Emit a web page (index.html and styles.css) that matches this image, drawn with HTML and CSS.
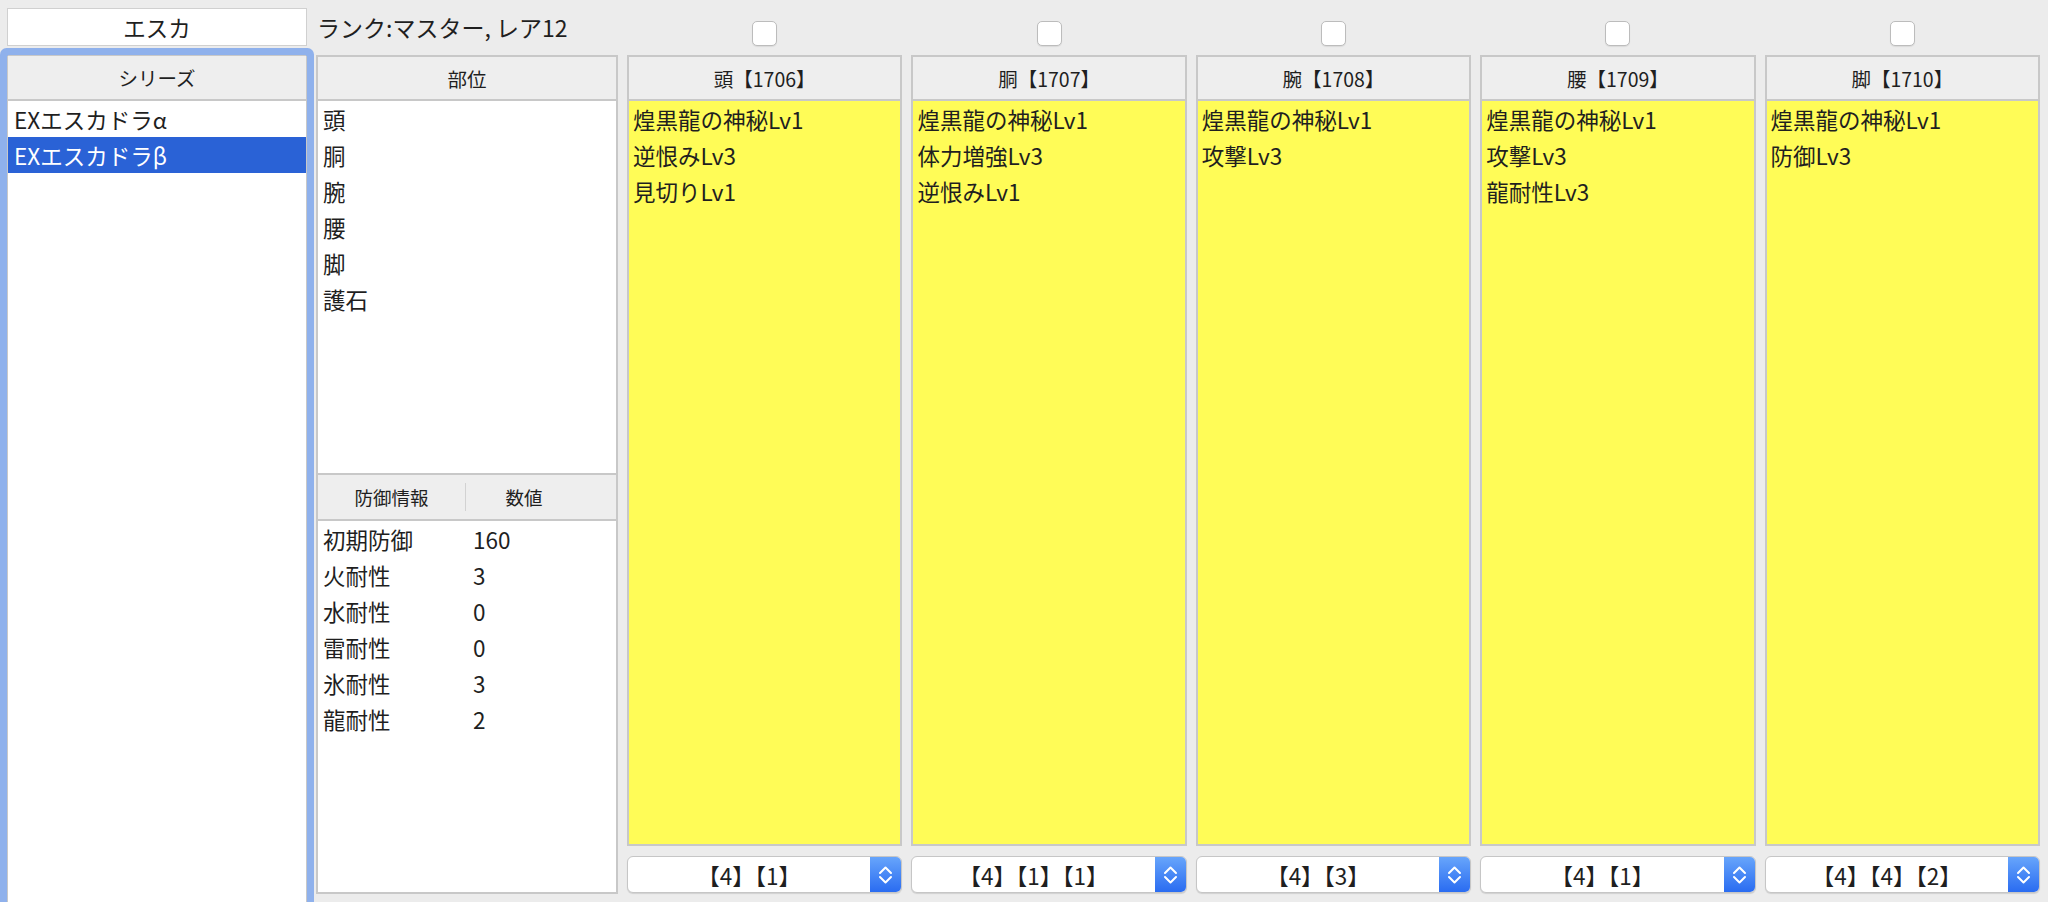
FILE: index.html
```html
<!DOCTYPE html>
<html lang="ja">
<head>
<meta charset="utf-8">
<title>エスカ</title>
<link rel="stylesheet" href="styles.css">
</head>
<body>
<div class="app">
  <div class="grid toprow">
    <div class="field">エスカ</div>
    <div class="rank">ランク:マスター, レア12</div>
    <div class="cbcell"><span class="cb"></span></div>
    <div class="cbcell"><span class="cb"></span></div>
    <div class="cbcell"><span class="cb"></span></div>
    <div class="cbcell"><span class="cb"></span></div>
    <div class="cbcell"><span class="cb"></span></div>
  </div>
  <div class="grid main">
    <div class="panel series">
      <div class="hdr">シリーズ</div>
      <div class="row">EXエスカドラα</div>
      <div class="row sel">EXエスカドラβ</div>
    </div>
    <div class="midcol">
      <div class="panel parts">
        <div class="hdr">部位</div>
        <div class="row">頭</div>
        <div class="row">胴</div>
        <div class="row">腕</div>
        <div class="row">腰</div>
        <div class="row">脚</div>
        <div class="row">護石</div>
      </div>
      <div class="panel defense">
        <div class="dhdr"><div class="c1">防御情報</div><div class="c2">数値</div></div>
        <div class="drow"><span>初期防御</span><span>160</span></div>
        <div class="drow"><span>火耐性</span><span>3</span></div>
        <div class="drow"><span>水耐性</span><span>0</span></div>
        <div class="drow"><span>雷耐性</span><span>0</span></div>
        <div class="drow"><span>氷耐性</span><span>3</span></div>
        <div class="drow"><span>龍耐性</span><span>2</span></div>
      </div>
    </div>
    <div class="armcol">
      <div class="panel armor">
        <div class="hdr">頭【1706】</div>
        <div class="row">煌黒龍の神秘Lv1</div>
        <div class="row">逆恨みLv3</div>
        <div class="row">見切りLv1</div>
      </div>
      <div class="popup"><div class="val">【4】【1】</div><div class="btn"><svg viewBox="0 0 31 37" width="31" height="37"><path d="M10 17 L15.5 11.5 L21 17 M10 21 L15.5 26.5 L21 21" fill="none" stroke="#fff" stroke-width="2" stroke-linecap="round" stroke-linejoin="round"/></svg></div></div>
    </div>
    <div class="armcol">
      <div class="panel armor">
        <div class="hdr">胴【1707】</div>
        <div class="row">煌黒龍の神秘Lv1</div>
        <div class="row">体力増強Lv3</div>
        <div class="row">逆恨みLv1</div>
      </div>
      <div class="popup"><div class="val">【4】【1】【1】</div><div class="btn"><svg viewBox="0 0 31 37" width="31" height="37"><path d="M10 17 L15.5 11.5 L21 17 M10 21 L15.5 26.5 L21 21" fill="none" stroke="#fff" stroke-width="2" stroke-linecap="round" stroke-linejoin="round"/></svg></div></div>
    </div>
    <div class="armcol">
      <div class="panel armor">
        <div class="hdr">腕【1708】</div>
        <div class="row">煌黒龍の神秘Lv1</div>
        <div class="row">攻撃Lv3</div>
      </div>
      <div class="popup"><div class="val">【4】【3】</div><div class="btn"><svg viewBox="0 0 31 37" width="31" height="37"><path d="M10 17 L15.5 11.5 L21 17 M10 21 L15.5 26.5 L21 21" fill="none" stroke="#fff" stroke-width="2" stroke-linecap="round" stroke-linejoin="round"/></svg></div></div>
    </div>
    <div class="armcol">
      <div class="panel armor">
        <div class="hdr">腰【1709】</div>
        <div class="row">煌黒龍の神秘Lv1</div>
        <div class="row">攻撃Lv3</div>
        <div class="row">龍耐性Lv3</div>
      </div>
      <div class="popup"><div class="val">【4】【1】</div><div class="btn"><svg viewBox="0 0 31 37" width="31" height="37"><path d="M10 17 L15.5 11.5 L21 17 M10 21 L15.5 26.5 L21 21" fill="none" stroke="#fff" stroke-width="2" stroke-linecap="round" stroke-linejoin="round"/></svg></div></div>
    </div>
    <div class="armcol">
      <div class="panel armor">
        <div class="hdr">脚【1710】</div>
        <div class="row">煌黒龍の神秘Lv1</div>
        <div class="row">防御Lv3</div>
      </div>
      <div class="popup"><div class="val">【4】【4】【2】</div><div class="btn"><svg viewBox="0 0 31 37" width="31" height="37"><path d="M10 17 L15.5 11.5 L21 17 M10 21 L15.5 26.5 L21 21" fill="none" stroke="#fff" stroke-width="2" stroke-linecap="round" stroke-linejoin="round"/></svg></div></div>
    </div>
  </div>
</div>
</body>
</html>
```

FILE: styles.css
```css
html, body {
  margin: 0;
  padding: 0;
}
body {
  width: 2048px;
  height: 902px;
  overflow: hidden;
  background: #ececec;
  font-family: "Noto Sans CJK JP", "Noto Sans", sans-serif;
  color: #1f1f1f;
}
.grid {
  display: grid;
  grid-template-columns: 300px 302px repeat(5, 1fr);
  column-gap: 9px;
  padding: 0 8px 0 7px;
}
.toprow {
  padding-top: 8px;
  height: 38px;
  align-items: end;
}
.field {
  height: 38px;
  box-sizing: border-box;
  background: #fff;
  border: 1px solid #d0d0d0;
  display: flex;
  align-items: center;
  justify-content: center;
  font-size: 22.5px;
}
.rank {
  align-self: center;
  font-size: 23px;
  white-space: nowrap;
  padding-left: 1px;
}
.cbcell {
  display: flex;
  justify-content: center;
  align-items: flex-end;
  height: 38px;
}
.cb {
  width: 25px;
  height: 25px;
  box-sizing: border-box;
  background: #fff;
  border: 1px solid #bcbcbc;
  border-radius: 5px;
  box-shadow: 0 1px 1px rgba(0, 0, 0, 0.08);
}
.main {
  margin-top: 9px;
  align-items: start;
}
.panel {
  background: #fff;
  border: 2px solid #c8c8c8;
  box-sizing: border-box;
}
.hdr {
  height: 42px;
  background: #eeeeee;
  border-bottom: 2px solid #c8c8c8;
  display: flex;
  align-items: center;
  justify-content: center;
  font-size: 19.5px;
  white-space: nowrap;
}
.row {
  height: 36px;
  line-height: 36px;
  font-size: 22.5px;
  padding-left: 5px;
  white-space: nowrap;
}
.series {
  height: 860px;
  border-width: 1px;
  border-radius: 2px;
  box-shadow: 0 0 0 7px #8fb1ec;
}
.series .hdr {
  height: 43px;
}
.series .row {
  padding-left: 6px;
}
.row.sel {
  background: #2a62d6;
  color: #fff;
}
.midcol {
  display: flex;
  flex-direction: column;
}
.parts {
  height: 420px;
}
.defense {
  height: 419px;
  border-top: none;
}
.dhdr {
  height: 44px;
  display: grid;
  grid-template-columns: 148px 116px 1fr;
  background: #eeeeee;
  border-bottom: 2px solid #c8c8c8;
  font-size: 18.5px;
}
.dhdr .c1,
.dhdr .c2 {
  display: flex;
  align-items: center;
  justify-content: center;
}
.dhdr .c1 {
  margin: 8px 0;
  border-right: 1px solid #d2d2d2;
}
.drow {
  display: grid;
  grid-template-columns: 148px 1fr;
  height: 36px;
  line-height: 36px;
  font-size: 22.5px;
}
.drow span:first-child {
  padding-left: 5px;
}
.drow span:last-child {
  padding-left: 7px;
}
.armcol {
  display: flex;
  flex-direction: column;
  gap: 10px;
}
.armor {
  height: 791px;
  background: #fffc57;
}
.armor .row {
  padding-left: 4px;
}
.popup {
  height: 37px;
  box-sizing: border-box;
  display: flex;
  background: #fff;
  border: 1px solid #c6c6c6;
  border-radius: 6px;
  box-shadow: 0 1px 1px rgba(0, 0, 0, 0.12);
  overflow: hidden;
}
.popup .val {
  flex: 1;
  display: flex;
  align-items: center;
  justify-content: center;
  font-size: 22.5px;
  white-space: nowrap;
}
.popup .btn {
  width: 31px;
  background: linear-gradient(#67a5fb, #2a6cf1);
  display: flex;
  align-items: center;
  justify-content: center;
}
.popup .btn svg {
  display: block;
}
```
